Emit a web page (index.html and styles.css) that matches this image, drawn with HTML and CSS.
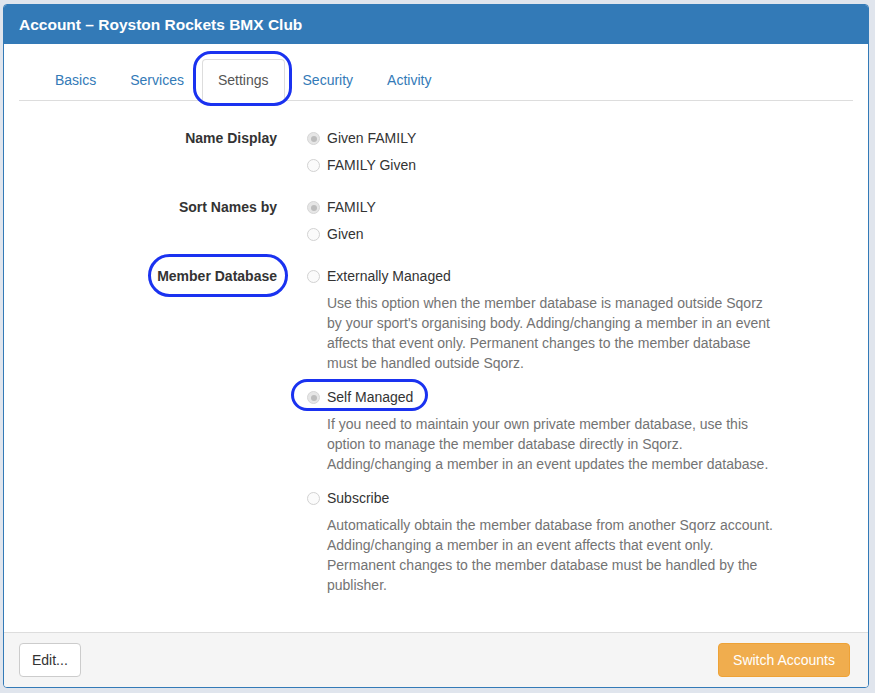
FILE: index.html
```html
<!DOCTYPE html>
<html>
<head>
<meta charset="utf-8">
<link rel="stylesheet" href="styles.css">
</head>
<body>
<div class="panel">
  <div class="panel-heading">Account – Royston Rockets BMX Club</div>
  <div class="panel-body">
    <ul class="tabs">
      <li><a>Basics</a></li>
      <li><a>Services</a></li>
      <li class="active hl hl-tab"><a>Settings</a></li>
      <li><a>Security</a></li>
      <li><a>Activity</a></li>
    </ul>
    <div class="form">
      <div class="group">
        <div class="label"><span>Name Display</span></div>
        <div class="control">
          <div class="radio"><span class="dot checked"></span>Given FAMILY</div>
          <div class="radio"><span class="dot"></span>FAMILY Given</div>
        </div>
      </div>
      <div class="group">
        <div class="label"><span>Sort Names by</span></div>
        <div class="control">
          <div class="radio"><span class="dot checked"></span>FAMILY</div>
          <div class="radio"><span class="dot"></span>Given</div>
        </div>
      </div>
      <div class="group">
        <div class="label"><span class="hl hl-label">Member Database</span></div>
        <div class="control">
          <div class="radio"><span class="dot"></span>Externally Managed</div>
          <p class="help">Use this option when the member database is managed outside Sqorz by your sport's organising body. Adding/changing a member in an event affects that event only. Permanent changes to the member database must be handled outside Sqorz.</p>
          <div class="radio"><span class="hl hl-radio"><span class="dot checked"></span>Self Managed</span></div>
          <p class="help">If you need to maintain your own private member database, use this option to manage the member database directly in Sqorz. Adding/changing a member in an event updates the member database.</p>
          <div class="radio"><span class="dot"></span>Subscribe</div>
          <p class="help">Automatically obtain the member database from another Sqorz account. Adding/changing a member in an event affects that event only. Permanent changes to the member database must be handled by the publisher.</p>
        </div>
      </div>
    </div>
  </div>
  <div class="panel-footer">
    <button class="btn">Edit...</button>
    <button class="btn btn-warning">Switch Accounts</button>
  </div>
</div>
</body>
</html>
```
FILE: styles.css
```css
* { box-sizing: border-box; }
html, body { margin: 0; padding: 0; }
body {
  background: #e0e5ed;
  font-family: "Liberation Sans", Arial, Helvetica, sans-serif;
  font-size: 14px;
  line-height: 20px;
  color: #333;
  padding: 4px 0 0 3px;
}
.panel {
  width: 866px;
  height: 684px;
  background: #fff;
  border: 1px solid #337ab7;
  border-radius: 4px;
  display: flex;
  flex-direction: column;
  overflow: hidden;
}
.panel-heading {
  background: #337ab7;
  color: #fff;
  font-weight: bold;
  font-size: 15.5px;
  line-height: 19px;
  padding: 10px 15px 10px 15px;
  flex-shrink: 0;
}
.panel-body {
  flex: 1;
  min-height: 0;
  padding: 15px;
}
.tabs {
  list-style: none;
  margin: 0;
  padding: 0 0 0 20px;
  display: flex;
  gap: 2px;
  border-bottom: 1px solid #ddd;
}
.tabs li {
  margin-bottom: -1px;
}
.tabs a {
  display: block;
  padding: 10px 15px;
  color: #337ab7;
  border: 1px solid transparent;
  border-radius: 4px 4px 0 0;
  line-height: 20px;
}
.tabs li.active a {
  color: #555;
  border-color: #ddd;
  border-bottom-color: #fff;
  background: #fff;
}
.form {
  margin-top: 20px;
}
.group {
  display: flex;
  gap: 30px;
  margin-bottom: 15px;
}
.label {
  width: 258px;
  text-align: right;
  font-weight: bold;
  padding-top: 7px;
}
.label span { display: inline-block; }
.control {
  width: 474px;
}
.radio {
  padding-top: 7px;
  min-height: 27px;
  padding-left: 20px;
  position: relative;
}
.dot {
  position: absolute;
  left: 0;
  top: 11px;
  width: 13px;
  height: 13px;
  border-radius: 50%;
  border: 1px solid #d2d2d2;
  background: #fbfbfb;
}
.dot.checked {
  background: #e6e6e6;
  border-color: #d6d6d6;
}
.dot.checked::after {
  content: "";
  position: absolute;
  left: 2.5px;
  top: 2.5px;
  width: 6px;
  height: 6px;
  border-radius: 50%;
  background: #bdbdbd;
}
.help {
  margin: 7px 0 7px 0;
  padding-left: 20px;
  color: #737373;
}
.hl { position: relative; }
.hl::before {
  content: "";
  position: absolute;
  border: 3px solid #1a32f0;
  pointer-events: none;
}
.hl-tab::before {
  left: -9px; right: -7px; top: -8px; bottom: -5px;
  border-radius: 18px;
}
.hl-label::before {
  left: -9px; right: -11px; top: -12px; bottom: -11px;
  border-radius: 22px;
}
.hl-radio { display: inline-block; }
.hl-radio .dot { left: -20px; top: 4px; }
.hl-radio::before {
  left: -36px; right: -15px; top: -8px; bottom: -4px;
  border-radius: 18px;
}
.panel-footer {
  flex-shrink: 0;
  background: #f5f5f5;
  border-top: 1px solid #ddd;
  padding: 10px 18px 10px 15px;
  display: flex;
  justify-content: space-between;
}
.btn {
  font-family: inherit;
  font-size: 14px;
  line-height: 20px;
  padding: 6px 12px;
  border: 1px solid #ccc;
  border-radius: 4px;
  background: #fff;
  color: #333;
  height: 34px;
}
.btn-warning {
  background: #f0ad4e;
  border-color: #eea236;
  color: #fff;
  padding: 6px 14px;
}
```
